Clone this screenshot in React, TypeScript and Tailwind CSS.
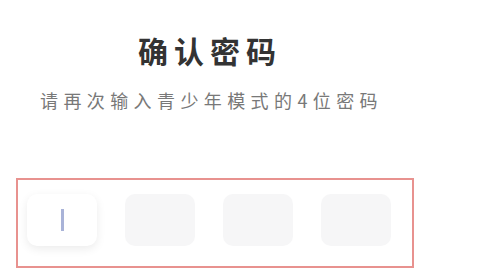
import React from 'react';

const font = { fontFamily: '"Noto Sans CJK SC", "Noto Sans", sans-serif' };

const App: React.FC = () => {
  const slots = [0, 1, 2, 3];

  return (
    <div className="w-[480px] h-[270px] bg-white overflow-hidden" style={font}>
      <div className="pt-[35px] pl-[138px]">
        <h1 className="text-[30px] leading-[30px] font-bold tracking-[6px] text-[#333333]">确认密码</h1>
      </div>
      <p className="mt-[25px] pl-[40px] text-[18px] leading-[20px] tracking-[5.4px] text-[#787878]">
        请再次输入青少年模式的4位密码
      </p>

      {/* code input */}
      <div className="mt-[68px] ml-[16px] w-[398px] h-[90px] border-2 border-[#e8928f] pl-[9px] pt-[14px] flex gap-[28px]">
        {slots.map((i) => (
          <div
            key={i}
            className={
              i === 0
                ? 'w-[70px] h-[52px] rounded-[10px] bg-white shadow-[0_3px_10px_rgba(0,0,0,0.08)] flex items-center justify-center'
                : 'w-[70px] h-[52px] rounded-[10px] bg-[#f6f6f7]'
            }
          >
            {i === 0 && <div className="w-[3px] h-[22px] bg-[#a9b3d8]" />}
          </div>
        ))}
      </div>
    </div>
  );
};

export default App;
